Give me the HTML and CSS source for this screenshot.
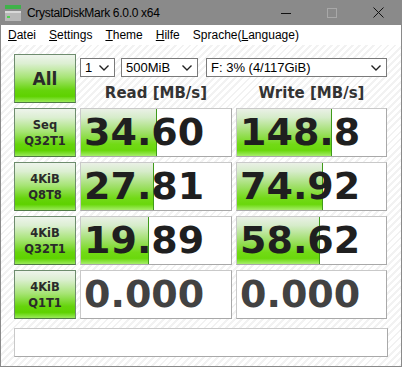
FILE: index.html
```html
<!doctype html>
<html>
<head>
<title>CrystalDiskMark 6.0.0 x64</title>
<link rel="stylesheet" href="styles.css">
</head>
<body>

<div class="window">
	<div class="titlebar">
		<svg class="appIcon" width="16" height="16" viewBox="0 0 16 16">
			<rect x="0" y="0" width="16" height="4" fill="#3fb24a"/>
			<rect x="0" y="6" width="16" height="10" fill="#b8b8b8"/>
			<rect x="0" y="6" width="16" height="2" fill="#d8d8d8"/>
			<rect x="2" y="11" width="3" height="2" fill="#4fd04f"/>
		</svg>
		<span class="title">CrystalDiskMark 6.0.0 x64</span>
		<div class="captionButtons">
			<span class="caption">
				<svg width="10" height="10" viewBox="0 0 10 10"><line x1="0" y1="5.5" x2="10" y2="5.5" stroke="#111" stroke-width="1"/></svg>
			</span>
			<span class="caption">
				<svg width="10" height="10" viewBox="0 0 10 10"><rect x="0.5" y="0.5" width="9" height="9" fill="none" stroke="#a8a8a8" stroke-width="1"/></svg>
			</span>
			<span class="caption">
				<svg width="11" height="11" viewBox="0 0 11 11"><path d="M0.5 0.5 L10.5 10.5 M10.5 0.5 L0.5 10.5" stroke="#111" stroke-width="1"/></svg>
			</span>
		</div>
	</div>

	<div class="menubar">
		<span><u>D</u>atei</span>
		<span><u>S</u>ettings</span>
		<span><u>T</u>heme</span>
		<span><u>H</u>ilfe</span>
		<span>Sprache(<u>L</u>anguage)</span>
	</div>

	<div class="main">
		<div class="grid">
			<div class="btn all">All</div>
			<div class="controls">
				<div class="combos">
					<div class="combo count">1<svg class="chev" width="10" height="6" viewBox="0 0 10 6"><polyline points="0.5,0.5 5,5 9.5,0.5" fill="none" stroke="#222" stroke-width="1.4"/></svg></div>
					<div class="combo size">500MiB<svg class="chev" width="10" height="6" viewBox="0 0 10 6"><polyline points="0.5,0.5 5,5 9.5,0.5" fill="none" stroke="#222" stroke-width="1.4"/></svg></div>
					<div class="combo drive">F: 3% (4/117GiB)<svg class="chev" width="10" height="6" viewBox="0 0 10 6"><polyline points="0.5,0.5 5,5 9.5,0.5" fill="none" stroke="#222" stroke-width="1.4"/></svg></div>
				</div>
				<div class="headers">
					<div>Read [MB/s]</div>
					<div>Write [MB/s]</div>
				</div>
			</div>

			<div class="btn">Seq<br>Q32T1</div>
			<div class="cell"><div class="bar" style="width:76px"></div><span class="val">34.60</span></div>
			<div class="cell"><div class="bar" style="width:95px"></div><span class="val">148.8</span></div>

			<div class="btn">4KiB<br>Q8T8</div>
			<div class="cell"><div class="bar" style="width:73px"></div><span class="val">27.81</span></div>
			<div class="cell"><div class="bar" style="width:86px"></div><span class="val">74.92</span></div>

			<div class="btn">4KiB<br>Q32T1</div>
			<div class="cell"><div class="bar" style="width:68px"></div><span class="val">19.89</span></div>
			<div class="cell"><div class="bar" style="width:83px"></div><span class="val">58.62</span></div>

			<div class="btn">4KiB<br>Q1T1</div>
			<div class="cell"><span class="val zero">0.000</span></div>
			<div class="cell"><span class="val zero">0.000</span></div>
		</div>

		<div class="comment"></div>
	</div>
</div>

</body>
</html>
```

FILE: styles.css
```css
body {
	margin: 0px;
	background-color: white;
}
.window {
	width: 400px;
	border: 1px solid #8a8a8a;
	border-top: none;
}
.titlebar {
	display: flex;
	align-items: center;
	height: 25px;
	background-color: #8a8a8a;
	font-family: "Liberation Sans", sans-serif;
	font-size: 12px;
	letter-spacing: -0.3px;
	color: #000;
}
.appIcon {
	margin: 0px 6px 0px 4px;
}
.title {
	flex-grow: 1;
}
.captionButtons {
	display: flex;
	height: 100%;
}
.caption {
	display: flex;
	align-items: center;
	justify-content: center;
	width: 46px;
}
.menubar {
	display: flex;
	gap: 13px;
	height: 20px;
	align-items: center;
	padding-left: 7px;
	background-color: white;
	font-family: "Liberation Sans", sans-serif;
	font-size: 12px;
	color: #000;
}
.main {
	padding: 9px 13px 9px 13px;
	background-color: #fff;
	background-image: repeating-linear-gradient(135deg, #ffffff 0px, #ffffff 3px, #f2f2f2 3px, #f2f2f2 5px);
}
.grid {
	display: grid;
	grid-template-columns: 62px 152px 151px;
	grid-auto-rows: 49px;
	column-gap: 4px;
	row-gap: 5px;
}
.btn {
	display: flex;
	align-items: center;
	justify-content: center;
	text-align: center;
	box-sizing: border-box;
	border: 1px solid #6e8c6e;
	border-bottom-color: #4f7a45;
	background-image: linear-gradient(to bottom, #eef4ec 0%, #dcefd2 18%, #a6e474 48%, #66d40c 75%, #5ed200 88%, #9aea5a 100%);
	font-family: "DejaVu Sans", sans-serif;
	font-weight: bold;
	font-size: 11.5px;
	line-height: 16px;
	color: #2a2a2a;
}
.all {
	font-size: 17px;
}
.controls {
	grid-column: 2 / 4;
	display: flex;
	flex-direction: column;
}
.combos {
	display: flex;
	margin-top: 4px;
}
.combo {
	display: flex;
	align-items: center;
	justify-content: space-between;
	box-sizing: border-box;
	height: 19px;
	padding: 0px 5px 0px 4px;
	border: 1px solid #7a7a7a;
	background-color: white;
	font-family: "Liberation Sans", sans-serif;
	font-size: 13px;
	color: #000;
}
.count {
	width: 35px;
}
.size {
	width: 77px;
	margin-left: 6px;
}
.drive {
	width: 181px;
	margin-left: 8px;
}
.headers {
	display: grid;
	grid-template-columns: 152px 151px;
	column-gap: 4px;
	margin-top: 7px;
	font-family: "DejaVu Sans", sans-serif;
	font-weight: bold;
	font-size: 15px;
	line-height: 18px;
	text-align: center;
	color: #333;
}
.cell {
	display: grid;
	box-sizing: border-box;
	border: 1px solid #c9c9c9;
	border-right-color: #a9a9a9;
	border-bottom-color: #a9a9a9;
	background-color: white;
	overflow: hidden;
}
.bar {
	grid-area: 1 / 1;
	box-sizing: border-box;
	border-right: 1px solid #3f9a1a;
	background-image: linear-gradient(to bottom, #eaf0e6 0%, #d6ecca 18%, #a2e06e 48%, #72da16 75%, #6ad80c 88%, #a6ee6a 100%);
}
.val {
	grid-area: 1 / 1;
	align-self: center;
	padding-left: 3px;
	font-family: "DejaVu Sans", sans-serif;
	font-weight: bold;
	font-size: 38px;
	line-height: 45px;
	color: #1f1f1f;
}
.zero {
	color: #424242;
}
.comment {
	box-sizing: border-box;
	height: 29px;
	margin-top: 9px;
	border: 1px solid #c9c9c9;
	border-right-color: #a9a9a9;
	border-bottom-color: #a9a9a9;
	background-color: white;
}
```
